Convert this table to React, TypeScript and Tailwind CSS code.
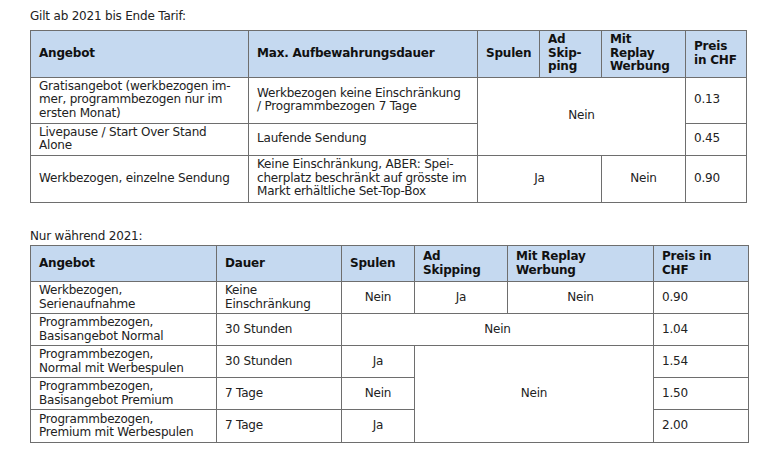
const cell = 'border border-[#6e6e6e] px-2 align-middle'
const head = 'border border-[#6e6e6e] bg-[#c5d9f0] px-2 align-middle font-bold text-[#111]'

export default function App() {
  return (
    <div className="h-[454px] w-[768px] bg-white pl-[30px] pt-[10px] font-['DejaVu_Sans',sans-serif] text-[12px] leading-[13.5px] tracking-[-0.2px] text-[#222]">
      <p className="mb-[6px]">Gilt ab 2021 bis Ende Tarif:</p>
      <table className="w-[716px] table-fixed border-collapse">
        <colgroup>
          <col className="w-[218px]" />
          <col className="w-[229px]" />
          <col className="w-[62px]" />
          <col className="w-[62px]" />
          <col className="w-[84px]" />
          <col className="w-[61px]" />
        </colgroup>
        <thead>
          <tr className="h-[47px]">
            <th className={`${head} text-left`}>Angebot</th>
            <th className={`${head} text-left`}>Max. Aufbewahrungsdauer</th>
            <th className={`${head} text-left`}>Spulen</th>
            <th className={`${head} text-left`}>Ad<br />Skip-<br />ping</th>
            <th className={`${head} text-left`}>Mit<br />Replay<br />Werbung</th>
            <th className={`${head} text-left`}>Preis<br />in CHF</th>
          </tr>
        </thead>
        <tbody>
          <tr className="h-[46px]">
            <td className={cell}>Gratisangebot (werkbezogen im-<br />mer, programmbezogen nur im<br />ersten Monat)</td>
            <td className={cell}>Werkbezogen keine Einschränkung<br />/ Programmbezogen 7 Tage</td>
            <td className={`${cell} text-center`} colSpan={3} rowSpan={2}>Nein</td>
            <td className={cell}>0.13</td>
          </tr>
          <tr className="h-[32px]">
            <td className={cell}>Livepause / Start Over Stand<br />Alone</td>
            <td className={cell}>Laufende Sendung</td>
            <td className={cell}>0.45</td>
          </tr>
          <tr className="h-[47px]">
            <td className={cell}>Werkbezogen, einzelne Sendung</td>
            <td className={`${cell} whitespace-nowrap`}>Keine Einschränkung, ABER: Spei-<br />cherplatz beschränkt auf grösste im<br />Markt erhältliche Set-Top-Box</td>
            <td className={`${cell} text-center`} colSpan={2}>Ja</td>
            <td className={`${cell} text-center`}>Nein</td>
            <td className={cell}>0.90</td>
          </tr>
        </tbody>
      </table>

      <p className="mb-[2px] mt-[27px]">Nur während 2021:</p>
      <table className="w-[718px] table-fixed border-collapse">
        <colgroup>
          <col className="w-[186px]" />
          <col className="w-[125px]" />
          <col className="w-[73px]" />
          <col className="w-[93px]" />
          <col className="w-[146px]" />
          <col className="w-[95px]" />
        </colgroup>
        <thead>
          <tr className="h-[36px]">
            <th className={`${head} text-left`}>Angebot</th>
            <th className={`${head} text-left`}>Dauer</th>
            <th className={`${head} text-left`}>Spulen</th>
            <th className={`${head} text-left`}>Ad<br />Skipping</th>
            <th className={`${head} text-left`}>Mit Replay<br />Werbung</th>
            <th className={`${head} text-left`}>Preis in<br />CHF</th>
          </tr>
        </thead>
        <tbody>
          <tr className="h-[32px]">
            <td className={cell}>Werkbezogen,<br />Serienaufnahme</td>
            <td className={cell}>Keine<br />Einschränkung</td>
            <td className={`${cell} text-center`}>Nein</td>
            <td className={`${cell} text-center`}>Ja</td>
            <td className={`${cell} text-center`}>Nein</td>
            <td className={cell}>0.90</td>
          </tr>
          <tr className="h-[32px]">
            <td className={cell}>Programmbezogen,<br />Basisangebot Normal</td>
            <td className={cell}>30 Stunden</td>
            <td className={`${cell} text-center`} colSpan={3}>Nein</td>
            <td className={cell}>1.04</td>
          </tr>
          <tr className="h-[32px]">
            <td className={cell}>Programmbezogen,<br />Normal mit Werbespulen</td>
            <td className={cell}>30 Stunden</td>
            <td className={`${cell} text-center`}>Ja</td>
            <td className={`${cell} text-center`} colSpan={2} rowSpan={3}>Nein</td>
            <td className={cell}>1.54</td>
          </tr>
          <tr className="h-[32px]">
            <td className={cell}>Programmbezogen,<br />Basisangebot Premium</td>
            <td className={cell}>7 Tage</td>
            <td className={`${cell} text-center`}>Nein</td>
            <td className={cell}>1.50</td>
          </tr>
          <tr className="h-[33px]">
            <td className={cell}>Programmbezogen,<br />Premium mit Werbespulen</td>
            <td className={cell}>7 Tage</td>
            <td className={`${cell} text-center`}>Ja</td>
            <td className={cell}>2.00</td>
          </tr>
        </tbody>
      </table>
    </div>
  )
}
